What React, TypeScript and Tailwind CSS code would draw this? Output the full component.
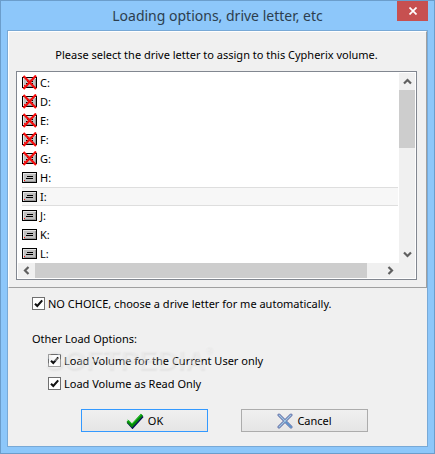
import { useState } from "react";

const drives = [
  { letter: "C:", used: true },
  { letter: "D:", used: true },
  { letter: "E:", used: true },
  { letter: "F:", used: true },
  { letter: "G:", used: true },
  { letter: "H:", used: false },
  { letter: "I:", used: false },
  { letter: "J:", used: false },
  { letter: "K:", used: false },
  { letter: "L:", used: false },
];

function DriveIcon({ used }: { used: boolean }) {
  return (
    <svg width="15" height="15" viewBox="0 0 15 15" shapeRendering="crispEdges" className="shrink-0">
      <rect x="0" y="2" width="15" height="11" fill="#000" />
      <rect x="1" y="3" width="13" height="9" fill="#c0c0c0" />
      <path d="M1 3h13v1H2v8H1z" fill="#e4e4e4" />
      <path d="M13 4h1v8H2v-1h11z" fill="#999" />
      <rect x="5" y="6" width="6" height="1" fill="#000" />
      <rect x="4" y="8" width="7" height="1" fill="#000" />
      <rect x="2" y="10" width="1" height="1" fill="#f00" />
      {used && (
        <path
          d="M1.5 1L14 14M14 0.5L1.5 14"
          stroke="#f50b0b"
          strokeWidth="2.2"
          shapeRendering="auto"
        />
      )}
    </svg>
  );
}

function Chevron({ d }: { d: string }) {
  return (
    <svg width="9" height="9" viewBox="0 0 9 9" fill="none" stroke="#606060" strokeWidth="2.2">
      <path d={d} />
    </svg>
  );
}

function CheckBox({ id, label }: { id: string; label: string }) {
  const [checked, setChecked] = useState(true);

  return (
    <div className="flex h-[23px] items-center gap-[3px]">
      <span className="grid size-[13px] shrink-0">
        <input
          id={id}
          type="checkbox"
          checked={checked}
          onChange={(e) => setChecked(e.target.checked)}
          className="col-start-1 row-start-1 size-[13px] appearance-none border border-[#707070] bg-white"
        />
        {checked && (
          <svg
            viewBox="0 0 13 13"
            className="pointer-events-none col-start-1 row-start-1 size-[13px]"
          >
            <path d="M3 6.7L5.3 9L10.2 3.4" fill="none" stroke="#111" strokeWidth="2.1" />
          </svg>
        )}
      </span>
      <label htmlFor={id} className="whitespace-nowrap">
        {label}
      </label>
    </div>
  );
}

export default function App() {
  const [selected, setSelected] = useState("I:");

  return (
    <div className="flex min-h-screen w-full flex-col border border-[#6b9dcb] bg-[#8dc7fa] px-[6px] pb-[6px] font-['Noto_Sans','Open_Sans',sans-serif] text-[11px] leading-4 text-black">
      <header className="grid h-[29px] grid-cols-[1fr_auto_1fr] items-start">
        <h1 className="col-start-2 pt-1 text-[14px] leading-[22px] whitespace-nowrap text-[#2c3e4e]">
          Loading options, drive letter, etc
        </h1>
        <button
          aria-label="Close"
          className="flex h-5 w-[31px] items-center justify-center justify-self-end bg-[#c75050]"
        >
          <svg width="8" height="8" viewBox="0 0 8 8" stroke="#fff" strokeWidth="1.7">
            <path d="M0.5 0.5L7.5 7.5M7.5 0.5L0.5 7.5" />
          </svg>
        </button>
      </header>

      <main className="flex grow flex-col border border-[#78a9d6] bg-[#f0f0f0]">
        <section className="border border-t-white border-r-[#a0a0a0] border-b-[#a0a0a0] border-l-white pr-[9px] pb-[7px] pl-[7px]">
          <p className="pt-[15px] pb-2 text-center whitespace-nowrap">
            Please select the drive letter to assign to this Cypherix volume.
          </p>

          <div className="border border-[#828790] bg-white p-px">
            <div className="flex">
              <ul role="listbox" aria-label="Drive letter" className="min-w-0 grow pr-px pl-1">
                {drives.map((drive) => (
                  <li
                    key={drive.letter}
                    role="option"
                    aria-selected={drive.letter === selected}
                    onClick={() => setSelected(drive.letter)}
                    className={
                      drive.letter === selected
                        ? "flex h-[19px] items-center gap-[3px] border-y border-[#dedede] bg-[#f7f7f7]"
                        : "flex h-[19px] items-center gap-[3px]"
                    }
                  >
                    <DriveIcon used={drive.used} />
                    {drive.letter}
                  </li>
                ))}
              </ul>
              <div className="flex w-4 flex-col bg-[#f0f0f0]">
                <button aria-label="Scroll up" className="flex h-[17px] items-center justify-center">
                  <Chevron d="M1 6.5L4.5 3L8 6.5" />
                </button>
                <div className="h-[58px] bg-[#cdcdcd]" />
                <button
                  aria-label="Scroll down"
                  className="mt-auto flex h-[17px] items-center justify-center"
                >
                  <Chevron d="M1 2.5L4.5 6L8 2.5" />
                </button>
              </div>
            </div>
            <div className="flex h-[15px] bg-[#f0f0f0] pr-4">
              <button aria-label="Scroll left" className="flex w-[17px] items-center justify-center">
                <Chevron d="M6.5 1L3 4.5L6.5 8" />
              </button>
              <div className="grow bg-[#cdcdcd]" />
              <button
                aria-label="Scroll right"
                className="flex w-8 items-center justify-end pr-1"
              >
                <Chevron d="M2.5 1L6 4.5L2.5 8" />
              </button>
            </div>
          </div>
        </section>

        <section className="pt-1 pl-6">
          <CheckBox id="auto-letter" label="NO CHOICE, choose a drive letter for me automatically." />
          <fieldset className="relative pt-4">
            <legend className="contents">Other Load Options:</legend>
            <div className="pt-[2px] pl-4">
              <CheckBox id="current-user" label="Load Volume for the Current User only" />
              <CheckBox id="read-only" label="Load Volume as Read Only" />
            </div>
            <div className="pointer-events-none absolute top-[29px] left-[13px] flex items-start font-['Liberation_Sans',sans-serif] text-[28px] leading-8 font-bold text-[#f4f4f4]/40 [text-shadow:1px_2px_2px_rgba(0,0,0,0.05)]">
              SOFTPEDIA
              <span className="text-[10px] leading-3">®</span>
            </div>
          </fieldset>
        </section>

        <footer className="flex justify-center gap-[33px] pt-[14px] pr-3 pb-[14px] pl-[26px]">
          <button className="flex h-[23px] w-[127px] items-center justify-center gap-1 border border-[#3399ff] bg-linear-to-b from-[#f0f0f0] to-[#e5e5e5]">
            <svg width="18" height="16" viewBox="0 0 18 16" fill="none">
              <path d="M2 9L6.5 14L16.5 3" stroke="#08085c" strokeWidth="3" />
              <path d="M1.5 8L6 12.5L16 1.8" stroke="#078a0b" strokeWidth="3" />
              <path d="M1.5 7L6 11L15.5 1.2" stroke="#20c928" strokeWidth="1" />
            </svg>
            OK
          </button>
          <button className="flex h-[23px] w-[127px] items-center justify-center gap-1 border border-[#acacac] bg-linear-to-b from-[#f0f0f0] to-[#e5e5e5]">
            <svg width="16" height="16" viewBox="0 0 16 16" fill="none" strokeLinecap="round">
              <path d="M2 2L14 14M14 2L2 14" stroke="#5b64a0" strokeWidth="3" />
              <path d="M2 2L14 14M14 2L2 14" stroke="#9fc8e4" strokeWidth="1.4" />
              <path d="M9 9L14 14" stroke="#5a94cc" strokeWidth="1.4" />
            </svg>
            Cancel
          </button>
        </footer>
      </main>
    </div>
  );
}
